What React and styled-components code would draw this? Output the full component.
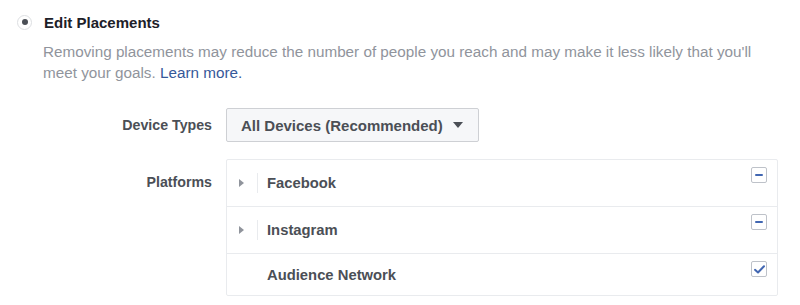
import React from "react";
import styled, { createGlobalStyle } from "styled-components";

const GlobalStyle = createGlobalStyle`
  body {
    margin: 0;
    background: #fff;
    font-family: "Liberation Sans", Arial, Helvetica, sans-serif;
    -webkit-font-smoothing: antialiased;
  }
`;

const Page = styled.div`
  padding: 11px 0 0 17px;
  width: 783px;
  box-sizing: border-box;
`;

const Header = styled.div`
  display: flex;
  align-items: center;
  gap: 12px;
  height: 22px;
`;

const Radio = styled.span`
  width: 15px;
  height: 15px;
  border-radius: 50%;
  border: 1px solid #dddfe2;
  box-sizing: border-box;
  display: flex;
  align-items: center;
  justify-content: center;
  background: #fff;

  &::after {
    content: "";
    width: 6px;
    height: 6px;
    border-radius: 50%;
    background: #4b4f56;
  }
`;

const Title = styled.span`
  font-size: 15px;
  font-weight: bold;
  color: #1d2129;
`;

const Description = styled.p`
  margin: 8px 0 0 26px;
  width: 712px;
  font-size: 15.25px;
  line-height: 21px;
  color: #90949c;
`;

const LearnMore = styled.a`
  color: #365899;
  text-decoration: none;
`;

const Form = styled.div`
  display: grid;
  grid-template-columns: 195px 552px;
  column-gap: 14px;
  row-gap: 17px;
  margin-top: 25px;
  align-items: start;
`;

const Label = styled.div`
  text-align: right;
  font-size: 14.2px;
  font-weight: bold;
  color: #4b4f56;
  line-height: ${(p) => p.$lh}px;
`;

const Dropdown = styled.button`
  justify-self: start;
  display: flex;
  align-items: center;
  gap: 10px;
  height: 34px;
  width: 253px;
  padding: 0 14px;
  box-sizing: border-box;
  background: #f6f7f9;
  border: 1px solid #ced0d4;
  border-radius: 2px;
  font-family: inherit;
  font-size: 15px;
  font-weight: bold;
  color: #4b4f56;
  cursor: pointer;
  white-space: nowrap;
`;

const Caret = styled.span`
  width: 0;
  height: 0;
  border-left: 5px solid transparent;
  border-right: 5px solid transparent;
  border-top: 6px solid #4b4f56;
`;

const Table = styled.div`
  border: 1px solid #e9ebee;
  border-radius: 2px;
`;

const Row = styled.div`
  display: flex;
  align-items: center;
  height: ${(p) => p.$h}px;
  padding: 0 10px 0 12px;
  border-top: ${(p) => (p.$first ? "none" : "1px solid #e9ebee")};
`;

const Toggle = styled.span`
  width: 18px;
  height: 20px;
  display: flex;
  align-items: center;
  border-right: 1px solid #e9ebee;
  margin-right: 9px;

  &::before {
    content: "";
    width: 0;
    height: 0;
    border-top: 4px solid transparent;
    border-bottom: 4px solid transparent;
    border-left: 5px solid #90949c;
  }
`;

const Spacer = styled.span`
  width: 28px;
`;

const Name = styled.span`
  flex: 1;
  font-size: 14.8px;
  font-weight: bold;
  color: #4b4f56;
`;

const Check = styled.span`
  align-self: flex-start;
  margin-top: 7px;
  width: 16px;
  height: 16px;
  box-sizing: border-box;
  border: 1px solid #bec2c9;
  border-radius: 2px;
  background: #fff;
  display: flex;
  align-items: center;
  justify-content: center;
`;

const Dash = styled.span`
  width: 8px;
  height: 2px;
  background: #4267b2;
  border-radius: 1px;
`;

const platforms = [
  { name: "Facebook", expandable: true, state: "mixed", h: 46 },
  { name: "Instagram", expandable: true, state: "mixed", h: 46 },
  { name: "Audience Network", expandable: false, state: "checked", h: 41 },
];

export default function App() {
  return (
    <>
      <GlobalStyle />
      <Page>
        <Header>
          <Radio />
          <Title>Edit Placements</Title>
        </Header>
        <Description>
          Removing placements may reduce the number of people you reach and may
          make it less likely that you'll meet your goals.{" "}
          <LearnMore href="#">Learn more.</LearnMore>
        </Description>
        <Form>
          <Label $lh={34}>Device Types</Label>
          <Dropdown>
            All Devices (Recommended)
            <Caret />
          </Dropdown>
          <Label $lh={46}>Platforms</Label>
          <Table>
            {platforms.map((p, i) => (
              <Row key={p.name} $h={p.h} $first={i === 0}>
                {p.expandable ? <Toggle /> : <Spacer />}
                <Name>{p.name}</Name>
                <Check>
                  {p.state === "mixed" ? (
                    <Dash />
                  ) : (
                    <svg width="11" height="9" viewBox="0 0 11 9">
                      <path
                        d="M1 4.8 L4 7.5 L10 1.2"
                        fill="none"
                        stroke="#4267b2"
                        strokeWidth="2"
                        strokeLinecap="round"
                        strokeLinejoin="round"
                      />
                    </svg>
                  )}
                </Check>
              </Row>
            ))}
          </Table>
        </Form>
      </Page>
    </>
  );
}
